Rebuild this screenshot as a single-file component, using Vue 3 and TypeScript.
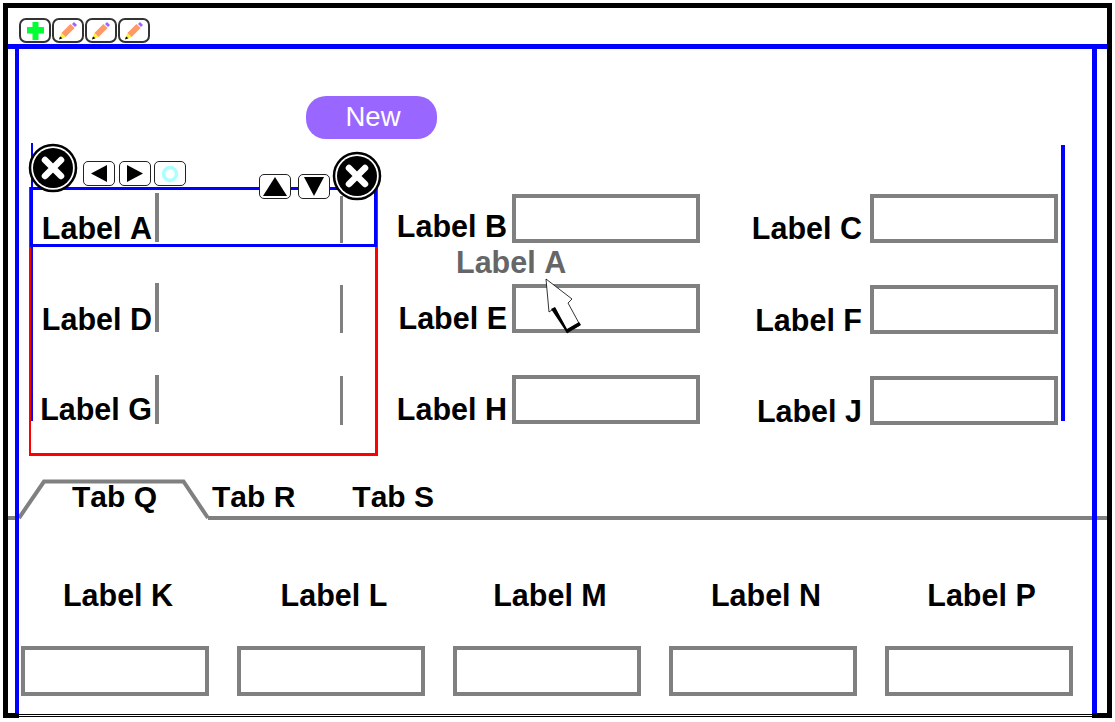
<script setup lang="ts">
interface Field {
  label: string;
  cls: string;
}

const tools = ["add", "edit", "edit", "edit"];
const panelRows = [
  { label: "Label A", cls: "row-a" },
  { label: "Label D", cls: "row-d" },
  { label: "Label G", cls: "row-g" },
];
const middle: Field[] = [
  { label: "Label B", cls: "f-b" },
  { label: "Label E", cls: "f-e" },
  { label: "Label H", cls: "f-h" },
];
const right: Field[] = [
  { label: "Label C", cls: "f-c" },
  { label: "Label F", cls: "f-f" },
  { label: "Label J", cls: "f-j" },
];
const tabs = ["Tab Q", "Tab R", "Tab S"];
const bottom = ["Label K", "Label L", "Label M", "Label N", "Label P"];
</script>

<template>
  <div class="canvas">
    <div class="frame">
      <div class="toolbar">
        <button v-for="(t, i) in tools" :key="i" class="tool">
          <svg v-if="t === 'add'" width="17" height="18" viewBox="0 0 17 18">
            <path d="M5.500 0h6v5h5.500v6.500h-5.500V18h-6v-6.500H0V5h5.500z" fill="#00ff33" />
          </svg>
          <svg v-else width="20" height="20" viewBox="0 0 20 20">
            <path d="M3.400 11.900 7.600 16.100 16.600 7.100 12.400 2.900z" fill="#ff9966" />
            <path d="M14 3 16 1 19 4 17 6z" fill="#9966ff" />
            <path d="M3.400 11.900 7.600 16.100 1 18.500z" fill="#ffee33" />
            <path d="M2 15.500 4.500 17.300 1 18.500z" fill="#000" />
          </svg>
        </button>
      </div>

      <div class="body">
        <button class="new-btn">New</button>

        <div class="form">
          <div class="panel">
            <div v-for="r in panelRows" :key="r.label" class="panel-row" :class="r.cls">
              <span class="label panel-label">{{ r.label }}</span>
              <span class="bar bar-l"></span>
              <span class="bar bar-r"></span>
            </div>
          </div>
          <div class="col col-mid">
            <div v-for="f in middle" :key="f.label" class="field" :class="f.cls">
              <span class="label">{{ f.label }}</span>
              <div class="input"></div>
            </div>
          </div>
          <div class="col col-right">
            <div v-for="f in right" :key="f.label" class="field" :class="f.cls">
              <span class="label">{{ f.label }}</span>
              <div class="input"></div>
            </div>
          </div>
        </div>

        <div class="tabs">
          <svg class="tab-shape" width="193" height="42" viewBox="0 0 193 42">
            <path d="M1 42V40L26 3.500H165.500L190 40V42z" fill="#fff" />
            <path d="M1 40 26 3.500H165.500L190 40" fill="none" stroke="#808080" stroke-width="4" />
          </svg>
          <span v-for="t in tabs" :key="t" class="label tab">{{ t }}</span>
        </div>

        <div class="bottom">
          <div v-for="b in bottom" :key="b" class="cell">
            <span class="label cell-label">{{ b }}</span>
            <div class="input cell-input"></div>
          </div>
        </div>
      </div>

      <div class="foot"></div>
    </div>

    <!-- things lying over the form -->
    <div class="rail rail-l"></div>
    <div class="rail rail-r"></div>
    <div class="side side-l"></div>
    <div class="side side-r"></div>
    <div class="corner corner-l"></div>
    <div class="corner corner-r"></div>

    <svg v-for="c in ['close-a', 'close-b']" :key="c" class="close" :class="c" width="50" height="50" viewBox="0 0 50 50">
      <circle cx="25" cy="25" r="23" fill="#fff" stroke="#000" stroke-width="2.500" />
      <circle cx="25" cy="25" r="20" fill="#000" />
      <path d="M17 17 33 33M33 17 17 33" stroke="#fff" stroke-width="6.500" stroke-linecap="round" />
    </svg>

    <button class="nudge n-left">
      <svg width="16" height="17" viewBox="0 0 16 17"><path d="M0 8.500 16 0V17z" /></svg>
    </button>
    <button class="nudge n-right">
      <svg width="16" height="17" viewBox="0 0 16 17"><path d="M16 8.500 0 0V17z" /></svg>
    </button>
    <button class="nudge n-dot">
      <svg width="18" height="18" viewBox="0 0 18 18"><circle cx="9" cy="9" r="6.500" fill="none" stroke="#aaffff" stroke-width="3.500" /></svg>
    </button>
    <button class="nudge n-up">
      <svg width="24" height="19" viewBox="0 0 24 19"><path d="M12 0 24 19H0z" /></svg>
    </button>
    <button class="nudge n-down">
      <svg width="20" height="19" viewBox="0 0 20 19"><path d="M10 19 20 0H0z" /></svg>
    </button>

    <span class="label ghost">Label A</span>
    <svg class="pointer" width="40" height="60" viewBox="0 0 40 60">
      <path d="M1 1 27 21 23 25 35 47 22 55 10 30 4 34z" fill="#fff" stroke="#000" stroke-width="0.800" />
      <path d="M6 31 10 29 22 51 34 44 36 47 22 55z" fill="#000" />
    </svg>
  </div>
</template>

<style scoped>
.canvas {
  position: relative;
  width: 1115px;
  height: 722px;
  overflow: hidden;
  background: #fff;
  font-family: "Liberation Sans", Arial, sans-serif;
  font-kerning: none;
}

.frame {
  box-sizing: border-box;
  display: flex;
  flex-direction: column;
  width: 1109px;
  height: 715px;
  margin: 3px 0 0 3px;
  border: 5px solid #000;
  border-bottom: 0;
}

.toolbar {
  display: flex;
  gap: 1px;
  height: 36px;
  padding: 10px 0 0 11px;
  box-sizing: border-box;
}

.tool {
  display: flex;
  align-items: center;
  justify-content: center;
  width: 32px;
  height: 25px;
  padding: 0;
  background: #fff;
  border: 2px solid #333;
  border-radius: 7px;
}

.body {
  flex: 1;
  border-top: 5px solid #00f;
}

.new-btn {
  display: block;
  width: 131px;
  height: 43px;
  margin: 47px 0 0 298px;
  padding: 0 0 2px 3px;
  border: 0;
  border-radius: 20px;
  background: #9966ff;
  color: #fff;
  font: 27.500px "Liberation Sans", Arial, sans-serif;
}

.label {
  font-size: 30.500px;
  font-weight: 700;
  line-height: 34px;
  color: #000;
  white-space: nowrap;
}

.form {
  display: flex;
  margin: 48px 0 0 21px;
  height: 268px;
}

.panel {
  box-sizing: border-box;
  position: relative;
  width: 349px;
  height: 269px;
  border: 3px solid #f00;
  border-top: 0;
  border-left-width: 2px;
}

.panel-row {
  box-sizing: border-box;
  display: flex;
  align-items: flex-start;
  height: 50px;
}

.panel-label {
  width: 121px;
  margin-top: 19px;
  text-align: right;
}

.bar {
  display: block;
  background: #808080;
  height: 49px;
}

.bar-l {
  width: 4px;
  margin-left: 3px;
}

.bar-r {
  width: 3px;
  margin-left: 181px;
}

.row-a {
  height: 60px;
  margin: 0 -2px 0 -1px;
  padding-top: 3px;
  border: 3px solid #00f;
}

.row-a .panel-label {
  width: 119px;
  margin-top: 18px;
}

.row-a .bar-r {
  margin-top: 3px;
  height: 47px;
}

.row-d {
  margin-top: 36px;
}

.row-d .bar-r {
  margin-top: 2px;
  height: 48px;
}

.row-g {
  margin-top: 42px;
}

.row-g .panel-label {
  margin-top: 17px;
}

.row-g .bar-r {
  margin-top: 1px;
}

.col {
  display: flex;
  flex-direction: column;
  margin-top: 7px;
}

.col-mid {
  width: 322px;
}

.col-right {
  width: 358px;
}

.field {
  display: flex;
  justify-content: flex-end;
  align-items: flex-start;
  gap: 5px;
  height: 49px;
  margin-bottom: 42px;
}

.f-b {
  margin-bottom: 41px;
}

.col-right .field {
  gap: 8px;
}

.input {
  box-sizing: border-box;
  flex: none;
  width: 188px;
  height: 49px;
  border: 4px solid #808080;
}

.field .label {
  margin-top: 15px;
}

.f-e .label,
.f-h .label,
.f-c .label {
  margin-top: 17px;
}

.f-f .label,
.f-j .label {
  margin-top: 18px;
}

.tabs {
  position: relative;
  display: flex;
  height: 39px;
  margin-top: 26px;
  padding-left: 64px;
  box-sizing: border-box;
  border-bottom: 4px solid #808080;
}

.tab-shape {
  position: absolute;
  left: 10px;
  top: -3px;
}

.tab {
  position: relative;
  font-size: 30px;
  margin-top: -1px;
}

.tab:nth-of-type(1) {
  margin-right: 55px;
}

.tab:nth-of-type(2) {
  margin-right: 57px;
}

.bottom {
  display: grid;
  grid-template-columns: repeat(5, 188px);
  column-gap: 28px;
  margin: 58px 0 0 13px;
}

.cell {
  display: flex;
  flex-direction: column;
  align-items: center;
}

.cell:last-child {
  margin-left: -1px;
}

.cell-label {
  padding-left: 6px;
}

.cell-input {
  margin-top: 34px;
  height: 50px;
}

.foot {
  height: 1px;
  margin-bottom: 1px;
  border-top: 1px solid #000;
  border-bottom: 1px solid #000;
}

.rail,
.side,
.corner {
  position: absolute;
}

.rail-l {
  left: 31px;
  top: 143px;
  width: 2px;
  height: 278px;
  background: #00f;
}

.rail-r {
  left: 1061px;
  top: 145px;
  width: 4px;
  height: 276px;
  background: #00f;
}

.side {
  top: 49px;
  height: 664px;
  background: #00f;
}

.side-l {
  left: 15px;
  width: 4px;
}

.side-r {
  left: 1092px;
  width: 5px;
}

.corner {
  top: 713px;
  height: 5px;
  background: #000;
}

.corner-l {
  left: 3px;
  width: 16px;
}

.corner-r {
  left: 1092px;
  width: 20px;
}

.close {
  position: absolute;
}

.close-a {
  left: 28px;
  top: 143px;
}

.close-b {
  left: 332px;
  top: 151px;
}

.nudge {
  position: absolute;
  display: flex;
  align-items: center;
  justify-content: center;
  box-sizing: border-box;
  width: 32px;
  height: 25px;
  padding: 0;
  background: #fff;
  border: 1px solid #222;
  border-radius: 5px;
}

.n-left {
  left: 83px;
  top: 161px;
}

.n-right {
  left: 119px;
  top: 161px;
}

.n-dot {
  left: 154px;
  top: 161px;
}

.n-up {
  left: 259px;
  top: 174px;
}

.n-down {
  left: 298px;
  top: 174px;
}

.ghost {
  position: absolute;
  left: 456px;
  top: 245px;
  color: #666;
}

.pointer {
  position: absolute;
  left: 545px;
  top: 278px;
}
</style>
